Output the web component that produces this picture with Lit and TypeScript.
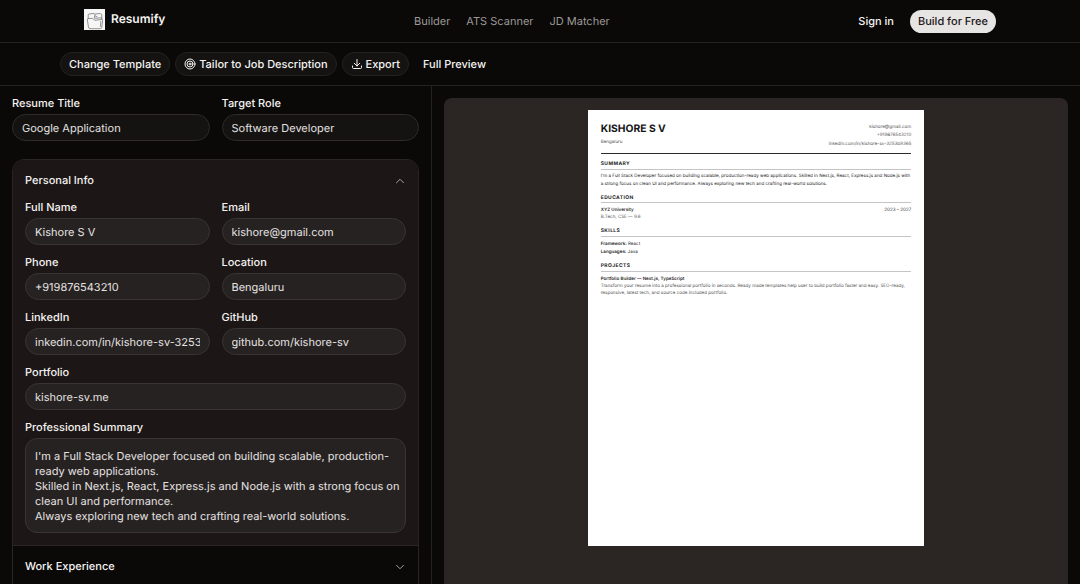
import { LitElement, html, css, svg, nothing } from "lit";
import { customElement, property, state } from "lit/decorators.js";
import { classMap } from "lit/directives/class-map.js";
import { styleMap } from "lit/directives/style-map.js";

interface Profile {
  fullName: string;
  email: string;
  phone: string;
  location: string;
  linkedin: string;
  github: string;
  portfolio: string;
  summary: string;
}

/** Width of a US Letter page at 96 dpi. */
const PAGE_WIDTH = 816;
/** Share of the desk that the page takes up. */
const PAGE_SHARE = 0.54;

const chevron = (open: boolean) => html`
  <svg class="chevron" viewBox="0 0 24 24" aria-hidden="true">
    ${open ? svg`<path d="m5 15.500 7-7 7 7" />` : svg`<path d="m5 8.500 7 7 7-7" />`}
  </svg>
`;

@customElement("site-header")
class SiteHeader extends LitElement {
  static styles = css`
    :host {
      display: block;
      border-bottom: 1px solid #242221;
    }
    .bar {
      display: flex;
      justify-content: space-between;
      align-items: center;
      height: 42px;
      max-width: 912px;
      margin: 0 auto;
    }
    a {
      color: inherit;
      text-decoration: none;
    }
    .brand {
      display: flex;
      align-items: center;
      gap: 6px;
      font-size: 12px;
      font-weight: 600;
      line-height: 16px;
      padding-bottom: 4px;
    }
    .logo {
      width: 21px;
      height: 21px;
    }
    .links {
      display: flex;
      gap: 16px;
      color: #9c9896;
    }
    .account {
      display: flex;
      justify-content: flex-end;
      align-items: center;
      gap: 16px;
      font-weight: 500;
    }
    .cta {
      border-radius: 12px;
      background: #e7e4e4;
      color: #1a1716;
      padding: 4px 8px;
      line-height: 15px;
    }
  `;

  render() {
    return html`
      <header class="bar">
        <a class="brand" href="#">
          <svg class="logo" viewBox="0 0 21 21" aria-hidden="true">
            <rect width="21" height="21" fill="#f6f6f6" />
            <g fill="none" stroke="#777" stroke-width=".8" stroke-linejoin="round" stroke-linecap="round">
              <path d="M4.200 9.500V6q0-.9.9-1l5-.6 1.200 1.600" />
              <path d="M10.500 8.500V6.600l2.500 1.200" />
              <path d="m11.500 5 4.800-.5 1.500 1v4" />
              <path d="M3.300 10.600q-.2-.9.7-1l4.600-.3 2 2 7-.8q1.200 0 1 1.100l-.8 6.600q-.2 1.500-1.500 1.500H6q-1.300 0-1.500-1.300Z" />
              <path d="m10.600 9.300 7-.5.400 1.700" />
              <path d="m16.800 12.500-.4 5" />
            </g>
          </svg>
          <span>Resumify</span>
        </a>
        <nav class="links">
          <a href="#builder">Builder</a>
          <a href="#ats">ATS Scanner</a>
          <a href="#jd">JD Matcher</a>
        </nav>
        <div class="account">
          <a href="#signin">Sign in</a>
          <a class="cta" href="#start">Build for Free</a>
        </div>
      </header>
    `;
  }
}

@customElement("builder-toolbar")
class BuilderToolbar extends LitElement {
  static styles = css`
    :host {
      display: flex;
      align-items: center;
      gap: 5px;
      height: 42px;
      padding: 0 60px;
      border-bottom: 1px solid #242221;
    }
    button {
      display: flex;
      align-items: center;
      gap: 3px;
      height: 24px;
      padding: 0 8px;
      border: 1px solid #242221;
      border-radius: 12px;
      background: #141312;
      color: inherit;
      font: inherit;
      font-weight: 500;
      text-rendering: inherit;
      white-space: nowrap;
    }
    .ghost {
      border-color: transparent;
      background: none;
    }
    svg {
      width: 12px;
      height: 12px;
      fill: none;
      stroke: currentColor;
      stroke-width: 2;
      stroke-linecap: round;
      stroke-linejoin: round;
    }
  `;

  render() {
    return html`
      <button type="button">Change Template</button>
      <button type="button">
        <svg viewBox="0 0 24 24" aria-hidden="true">
          <circle cx="12" cy="12" r="10" />
          <circle cx="12" cy="12" r="6" />
          <circle cx="12" cy="12" r="2" />
        </svg>
        Tailor to Job Description
      </button>
      <button type="button">
        <svg viewBox="0 0 24 24" aria-hidden="true">
          <path d="M12 3v13M6.500 10.500 12 16l5.500-5.500M3 16v3a2 2 0 0 0 2 2h14a2 2 0 0 0 2-2v-3" />
        </svg>
        Export
      </button>
      <button type="button" class="ghost">Full Preview</button>
    `;
  }
}

@customElement("text-field")
class TextField extends LitElement {
  @property() label = "";
  @property() value = "";
  @property({ type: Boolean }) multiline = false;

  static styles = css`
    :host {
      display: flex;
      flex-direction: column;
      gap: 4px;
      min-width: 0;
    }
    label {
      font-weight: 500;
      line-height: 13px;
    }
    input,
    textarea {
      box-sizing: border-box;
      display: block;
      width: 100%;
      margin: 0;
      border: 1px solid var(--field-border, #2e2b2a);
      background: var(--field-bg, #141312);
      color: #e4e1e0;
      font: inherit;
      text-rendering: inherit;
      outline: none;
    }
    input {
      height: 27px;
      padding: 0 9px;
      border-radius: 14px;
    }
    textarea {
      height: 95px;
      padding: 10px 4px 8px 9px;
      border-radius: 12px;
      line-height: 15px;
      resize: none;
      overflow: hidden;
    }
  `;

  private onInput(e: Event) {
    this.value = (e.target as HTMLInputElement).value;
    this.dispatchEvent(new CustomEvent("value-changed", { detail: this.value }));
  }

  render() {
    return html`
      <label for="control">${this.label}</label>
      ${this.multiline
        ? html`<textarea id="control" spellcheck="false" .value=${this.value} @input=${this.onInput}></textarea>`
        : html`<input id="control" type="text" spellcheck="false" .value=${this.value} @input=${this.onInput} />`}
    `;
  }
}

@customElement("resume-page")
class ResumePage extends LitElement {
  @property({ attribute: false }) profile!: Profile;

  static styles = css`
    :host {
      display: block;
      box-sizing: border-box;
      width: 816px;
      height: 1056px;
      padding: 34px 32px 32px;
      background: #fff;
      color: #1f1f1f;
      font-size: 11px;
      line-height: 17px;
    }
    .top {
      display: flex;
      justify-content: space-between;
      height: 70px;
      border-bottom: 2px solid #2c2c2c;
      color: #555;
    }
    h1 {
      margin: 0 0 8px;
      font-size: 25px;
      font-weight: 700;
      line-height: 28px;
      color: #141414;
    }
    .contact {
      text-align: right;
      line-height: 20px;
    }
    h2 {
      margin: 0 0 9px;
      padding-bottom: 3px;
      border-bottom: 1px solid #c4c4c4;
      font-size: 12px;
      font-weight: 700;
      line-height: 16px;
      letter-spacing: 1px;
      text-transform: uppercase;
      color: #1a1a1a;
    }
    section {
      margin-top: 17px;
    }
    p {
      margin: 0;
    }
    .entry {
      display: flex;
      justify-content: space-between;
    }
    .muted {
      color: #555;
    }
    .skill + .skill {
      margin-top: 4px;
    }
    b {
      font-weight: 600;
    }
  `;

  render() {
    const p = this.profile;
    return html`
      <article>
        <div class="top">
          <div>
            <h1>${p.fullName.toUpperCase()}</h1>
            <p>${p.location}</p>
          </div>
          <div class="contact">
            <p>${p.email}</p>
            <p>${p.phone}</p>
            <p>${p.linkedin}</p>
          </div>
        </div>
        <section>
          <h2>Summary</h2>
          <p>${p.summary}</p>
        </section>
        <section>
          <h2>Education</h2>
          <p class="entry"><b>XYZ University</b><span>2023 – 2027</span></p>
          <p class="muted">B.Tech, CSE — 9.6</p>
        </section>
        <section>
          <h2>Skills</h2>
          <p class="skill"><b>Framework:</b> React</p>
          <p class="skill"><b>Languages:</b> Java</p>
        </section>
        <section>
          <h2>Projects</h2>
          <p><b>Portfolio Builder — Next.js, TypeScript</b></p>
          <p class="muted">
            Transform your resume into a professional portfolio in seconds. Ready made templates help user to build
            portfolio faster and easy. SEO-ready, responsive, latest tech, and source code included portfolio.
          </p>
        </section>
      </article>
    `;
  }
}

@customElement("resume-desk")
class ResumeDesk extends LitElement {
  @property({ attribute: false }) profile!: Profile;
  @state() private zoom = 0.4;

  private observer = new ResizeObserver(() => this.measure());

  static styles = css`
    :host {
      display: flex;
      justify-content: center;
      align-items: flex-start;
      flex: 1;
      min-width: 0;
      padding-top: 12px;
      border-radius: 8px 8px 0 0;
      background: #2b2624;
      overflow: hidden;
    }
    resume-page {
      flex: none;
    }
  `;

  connectedCallback() {
    super.connectedCallback();
    this.observer.observe(this);
  }

  disconnectedCallback() {
    this.observer.disconnect();
    super.disconnectedCallback();
  }

  private measure() {
    this.zoom = (this.clientWidth * PAGE_SHARE) / PAGE_WIDTH;
  }

  render() {
    return html`<resume-page style=${styleMap({ zoom: String(this.zoom) })} .profile=${this.profile}></resume-page>`;
  }
}

@customElement("app-root")
class AppRoot extends LitElement {
  @state() private open = "personal";
  @state() private profile: Profile = {
    fullName: "Kishore S V",
    email: "kishore@gmail.com",
    phone: "+919876543210",
    location: "Bengaluru",
    linkedin: "inkedin.com/in/kishore-sv-3253b9365",
    github: "github.com/kishore-sv",
    portfolio: "kishore-sv.me",
    summary:
      "I'm a Full Stack Developer focused on building scalable, production-ready web applications.\nSkilled in Next.js, React, Express.js and Node.js with a strong focus on clean UI and performance.\nAlways exploring new tech and crafting real-world solutions.",
  };

  static styles = css`
    :host {
      display: flex;
      flex-direction: column;
      height: 100vh;
      overflow: hidden;
      background: #0a0908;
      color: #f5f3f2;
      font-family: Inter, "Liberation Sans", sans-serif;
      font-size: 11px;
      line-height: 15px;
      text-rendering: geometricPrecision;
    }
    .workspace {
      display: grid;
      grid-template-columns: 2fr 3fr;
      flex: 1;
      min-height: 0;
    }
    .editor {
      display: flex;
      flex-direction: column;
      gap: 18px;
      box-sizing: border-box;
      min-width: 0;
      padding: 11px 12px 0;
      border-right: 1px solid #242221;
      overflow: hidden;
    }
    .fields {
      display: grid;
      grid-template-columns: 1fr 1fr;
      gap: 11px 12px;
    }
    .wide {
      grid-column: 1 / -1;
    }
    .accordion {
      flex: none;
      border: 1px solid #292524;
      border-radius: 12px 12px 0 0;
      overflow: hidden;
    }
    .panel + .panel {
      border-top: 1px solid #292524;
    }
    .panel.open {
      --field-bg: #272222;
      --field-border: #3a3534;
      background: #1c1716;
      padding-bottom: 12px;
    }
    .toggle {
      display: flex;
      justify-content: space-between;
      align-items: center;
      width: 100%;
      height: 41px;
      padding: 0 12px;
      border: 0;
      background: none;
      color: inherit;
      font: inherit;
      font-weight: 500;
      text-rendering: inherit;
    }
    .chevron {
      width: 12px;
      height: 12px;
      fill: none;
      stroke: #a8a29e;
      stroke-width: 2;
      stroke-linecap: round;
      stroke-linejoin: round;
    }
    .body {
      padding: 0 12px;
    }
    .preview {
      display: flex;
      min-width: 0;
      padding: 12px 12px 0;
    }
  `;

  private field(key: keyof Profile, label: string, wide = false, multiline = false) {
    return html`
      <text-field
        class=${classMap({ wide })}
        .label=${label}
        .value=${this.profile[key]}
        .multiline=${multiline}
        @value-changed=${(e: CustomEvent<string>) => (this.profile = { ...this.profile, [key]: e.detail })}
      ></text-field>
    `;
  }

  private panel(id: string, title: string, body: unknown = nothing) {
    const open = this.open === id;
    return html`
      <section class=${classMap({ panel: true, open })}>
        <button
          class="toggle"
          type="button"
          aria-expanded=${open ? "true" : "false"}
          @click=${() => (this.open = open ? "" : id)}
        >
          ${title} ${chevron(open)}
        </button>
        ${open ? html`<div class="body">${body}</div>` : nothing}
      </section>
    `;
  }

  render() {
    return html`
      <site-header></site-header>
      <builder-toolbar></builder-toolbar>
      <main class="workspace">
        <form class="editor">
          <div class="fields">
            <text-field label="Resume Title" value="Google Application"></text-field>
            <text-field label="Target Role" value="Software Developer"></text-field>
          </div>
          <div class="accordion">
            ${this.panel(
              "personal",
              "Personal Info",
              html`
                <div class="fields">
                  ${this.field("fullName", "Full Name")} ${this.field("email", "Email")}
                  ${this.field("phone", "Phone")} ${this.field("location", "Location")}
                  ${this.field("linkedin", "LinkedIn")} ${this.field("github", "GitHub")}
                  ${this.field("portfolio", "Portfolio", true)}
                  ${this.field("summary", "Professional Summary", true, true)}
                </div>
              `
            )}
            ${this.panel("work", "Work Experience")}
          </div>
        </form>
        <div class="preview">
          <resume-desk .profile=${this.profile}></resume-desk>
        </div>
      </main>
    `;
  }
}
